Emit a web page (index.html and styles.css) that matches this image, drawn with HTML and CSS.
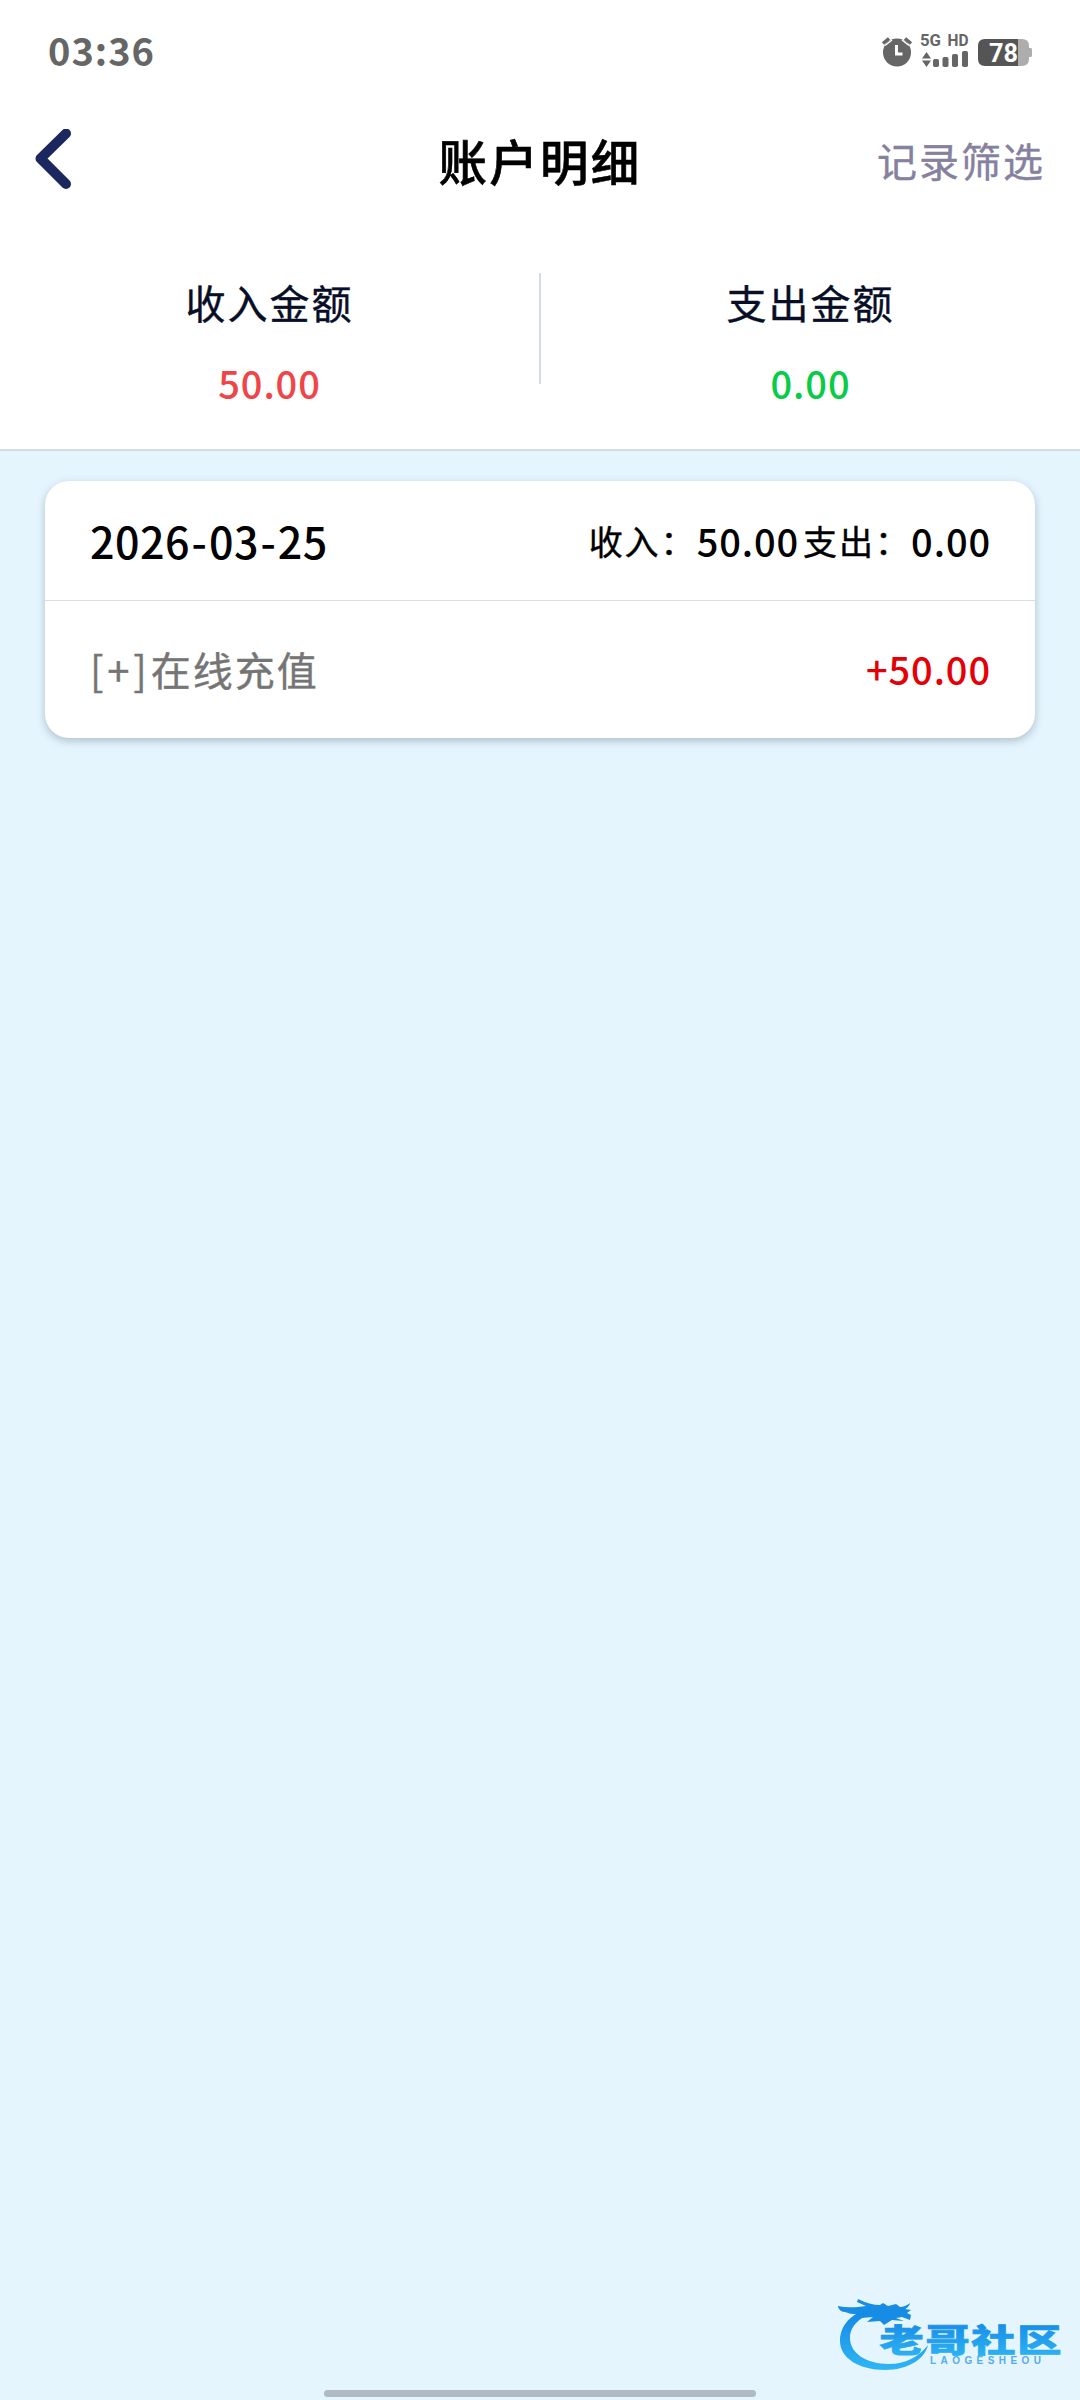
FILE: index.html
```html
<!DOCTYPE html>
<html lang="zh-CN">
<head>
<meta charset="utf-8">
<title>账户明细</title>
<link rel="stylesheet" href="styles.css">
</head>
<body>
<div class="screen">
  <div class="status-bar">
    <span class="clock">03:36</span>
    <svg class="status-icons" width="160" height="50" viewBox="880 25 160 50">
      <g fill="#666">
        <circle cx="897" cy="52.5" r="14"/>
        <path d="M883 43.500l6-5M905 38.500l6 5" stroke="#666" stroke-width="3.500" fill="none"/>
        <path d="M885 45.500l7-5.500M902 40l7 5.500" stroke="#fff" stroke-width="1.500" fill="none"/>
        <path d="M896.500 45v9h6" stroke="#fff" stroke-width="3" fill="none"/>
        <text class="network" x="920" y="46" textLength="21" lengthAdjust="spacingAndGlyphs">5G</text>
        <text class="network" x="947.5" y="46" textLength="21" lengthAdjust="spacingAndGlyphs">HD</text>
        <path d="M922 58.500l4.500-6.500l4.500 6.500zM922 60.500l4.500 6.500l4.500-6.500z"/>
        <rect x="933" y="59" width="6" height="8" rx="1.800"/>
        <rect x="942.500" y="57" width="6" height="10" rx="1.800"/>
        <rect x="952" y="54" width="6" height="13" rx="1.800"/>
        <rect x="962" y="51" width="6" height="16" rx="1.800"/>
      </g>
      <path d="M1018 39h4q7 0 7 7v2h2q1 0 1 2v5q0 2-1 2h-2v2q0 7-7 7h-4z" fill="#adadad"/>
      <path d="M1018 39v27h-33q-7 0-7-7v-13q0-7 7-7z" fill="#555"/>
      <text class="battery" x="989" y="61.500" textLength="29" lengthAdjust="spacingAndGlyphs">78</text>
    </svg>
  </div>
  <header class="header">
    <svg class="back" width="36" height="60" viewBox="0 0 36 60"><path d="M31 4.500L5.500 29.500L31 55" fill="none" stroke="#1b285f" stroke-width="10" stroke-linecap="round" stroke-linejoin="round"/></svg>
    <h1 class="title">账户明细</h1>
    <span class="filter">记录筛选</span>
  </header>
  <section class="summary">
    <div class="total"><span class="total-label">收入金额</span><span class="amount income">50.00</span></div>
    <div class="divider"></div>
    <div class="total"><span class="total-label">支出金额</span><span class="amount expense">0.00</span></div>
  </section>
  <main class="content">
    <article class="card">
      <div class="card-head">
        <span class="date">2026<span class="dash">-</span>03<span class="dash">-</span>25</span>
        <div class="day-totals"><span class="day-label">收入：</span><span class="amount">50.00</span><span class="day-label second">支出：</span><span class="amount">0.00</span></div>
      </div>
      <div class="entry"><span class="entry-name"><span class="mark">[+]</span>在线充值</span><span class="amount entry-amount">+50.00</span></div>
    </article>
  </main>
  <svg class="watermark" width="240" height="90" viewBox="830 2290 240 90">
    <defs><linearGradient id="blue" x1="0" y1="0" x2="0" y2="1"><stop offset="0" stop-color="#1485e4"/><stop offset="1" stop-color="#2fb6f4"/></linearGradient></defs>
    <path d="M872 2308C852 2312 840 2325 840 2341C840 2358 859 2370 885 2370C908 2370 925 2359 928 2345C919 2357 905 2364 889 2364C866 2364 850 2353 850 2338C850 2325 861 2316 879 2311z" fill="url(#blue)"/>
    <path d="M838 2306q8 2 20 1l8-1-9-4 1-3q12 6 22 6l3-2 5 3 8-2 4 3q5 0 10-4-1 4-5 6l6 1-4 3 4 2-1 5-8-3-6 1 8 3-12-1-8 5-4-4-13 1 6-5-12 1 7-5q-14 3-23-1-5 0-7-5z" fill="#168ce5"/>
    <text class="brand" transform="translate(879.500 2351.500) scale(1.3 .92)" fill="url(#blue)" textLength="140">老哥社区</text>
    <text class="brand-sub" x="930" y="2364" textLength="111">LAOGESHEOU</text>
  </svg>
  <div class="home-indicator"></div>
</div>
</body>
</html>
```
FILE: styles.css
```css
* { box-sizing: border-box; }
body { margin: 0; background: #e4f5fe; }
.screen {
  position: relative;
  width: 1080px;
  height: 2400px;
  display: flex;
  flex-direction: column;
  background: #e4f5fe;
  font-family: "Noto Sans CJK SC", sans-serif;
  color: #000;
}
.status-bar {
  height: 100px;
  padding: 0 40px 0 48px;
  display: flex;
  align-items: center;
  justify-content: space-between;
  background: #fff;
}
.clock { margin-top: -1px; font-size: 38px; font-weight: 700; line-height: 50px; letter-spacing: 1px; color: #666; }
.network { font: 700 16.500px Roboto, sans-serif; }
.battery { font: 700 26px Roboto, sans-serif; fill: #fff; }
.header {
  height: 120px;
  padding: 0 35px;
  display: grid;
  grid-template-columns: 1fr auto 1fr;
  align-items: center;
  background: #fff;
}
.back { display: block; margin-top: -2px; }
.title { margin: 0; font-size: 48.500px; font-weight: 500; line-height: 60px; letter-spacing: 2.200px; -webkit-text-stroke: .6px #000; }
.filter { justify-self: end; margin-top: 0; font-size: 40px; line-height: 60px; letter-spacing: 2px; color: #85819e; -webkit-text-stroke: .4px; }
.summary {
  height: 231px;
  display: flex;
  background: #fff;
  border-bottom: 2px solid #d4dde3;
}
.total { flex: 1; display: flex; flex-direction: column; align-items: center; padding-top: 52px; }
.total-label { font-size: 40px; line-height: 60px; letter-spacing: 2px; color: #080e26; -webkit-text-stroke: .4px; }
.divider { width: 2px; height: 111px; margin-top: 53px; background: #d6dde2; }
.amount { font-size: 38px; line-height: 50px; font-weight: 500; letter-spacing: .9px; }
.total .amount { margin-top: 26px; }
.income { color: #f04448; }
.expense { color: #08cc48; }
.content { flex: 1; padding: 30px 45px; }
.card { height: 257px; border-radius: 24px; background: #fff; box-shadow: 0 3px 9px rgba(60, 70, 90, .3); }
.card-head { height: 120px; padding: 0 44px 0 45px; display: flex; align-items: center; justify-content: space-between; border-bottom: 1px solid #dcdddf; }
.date { margin-top: -2px; font-size: 43px; font-weight: 500; line-height: 60px; letter-spacing: .5px; }
.dash { padding: 0 1.500px; }
.day-totals { display: flex; align-items: center; }
.day-label { font-size: 34px; line-height: 50px; letter-spacing: 2px; -webkit-text-stroke: .4px; }
.second { margin-left: 4px; }
.entry { height: 137px; padding: 0 44px 0 45px; display: flex; align-items: center; justify-content: space-between; }
.entry .amount { margin-top: -2px; }
.entry-name { margin-top: -2px; font-size: 40px; line-height: 60px; letter-spacing: 2px; color: #757575; -webkit-text-stroke: .4px; }
.mark { letter-spacing: 3.800px; }
.entry-amount { color: #e50008; }
.watermark { position: absolute; left: 830px; top: 2290px; }
.brand { font: 900 34px "Noto Sans CJK SC", sans-serif; stroke: url(#blue); stroke-width: .8px; }
.brand-sub { font: 700 10px "Liberation Sans", sans-serif; fill: #55adeb; }
.home-indicator { width: 432px; height: 7px; margin: 0 auto 3px; border-radius: 4px; background: #afbac2; }
```
